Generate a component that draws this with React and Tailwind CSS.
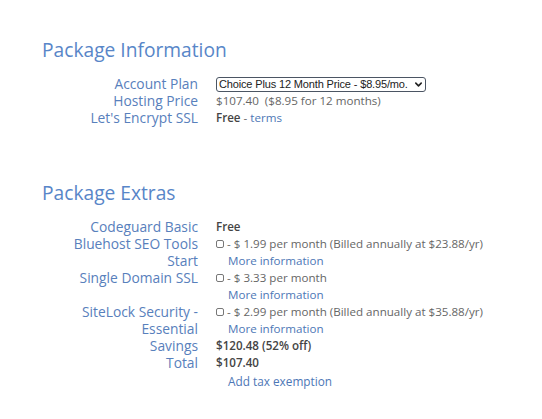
import React from 'react';

const label = "text-right text-[13.8px] leading-[17px] text-[#5880bc]";
const value = "text-[11.6px] leading-[17px] text-[#666]";

const Box = () => (
  <span className="inline-block w-[8px] h-[8px] border border-[#777] rounded-[2px] mr-[3px] align-[0px]"></span>
);

const Row = ({ name, children }) => (
  <>
    <div className={label}>{name}</div>
    <div className={value}>{children}</div>
  </>
);

const Extra = ({ price, billed }) => (
  <div>
    <div className="whitespace-nowrap">
      <Box />- $ {price} per month{billed && <> (Billed annually at ${billed}/yr)</>}
    </div>
    <div className="pl-[12px]">
      <a className="text-[#4d77b6] text-[11.6px]">More information</a>
    </div>
  </div>
);

export default function App() {
  return (
    <div className="w-[542px] h-[419px] bg-white px-[42px] pt-[37px]" style={{ fontFamily: '"Open Sans", sans-serif' }}>
      <h2 className="text-[19.2px] leading-[26px] text-[#5886c8]">Package Information</h2>
      <div className="grid grid-cols-[156px_1fr] gap-x-[18px] mt-[12px]">
        <Row name="Account Plan">
          <div className="flex items-center w-[210px] h-[15px] mt-[2px] border border-[#4b5563] rounded-[3px] pl-[2px] pr-[2px] text-[#222] text-[11px] tracking-[-0.15px] leading-[13px]" style={{ fontFamily: '"Liberation Sans", Arial, sans-serif' }}>
            <span className="flex-1 whitespace-nowrap overflow-hidden">Choice Plus 12 Month Price - $8.95/mo.</span>
            <svg className="w-[9px] h-[9px] shrink-0" viewBox="0 0 10 10" fill="none" stroke="#222" strokeWidth="1.8" strokeLinecap="round" strokeLinejoin="round">
              <path d="M2 3.5l3 3 3-3" />
            </svg>
          </div>
        </Row>
        <Row name="Hosting Price">$107.40&nbsp; ($8.95 for 12 months)</Row>
        <Row name="Let's Encrypt SSL">
          <span className="font-semibold text-[#444]">Free</span> - <a className="text-[#4d77b6]">terms</a>
        </Row>
      </div>

      <h2 className="text-[19.2px] leading-[26px] text-[#5886c8] mt-[54px]">Package Extras</h2>
      <div className="grid grid-cols-[156px_1fr] gap-x-[18px] mt-[12px]">
        <Row name="Codeguard Basic">
          <span className="font-semibold text-[#444]">Free</span>
        </Row>
        <Row name={<>Bluehost SEO Tools<br />Start</>}>
          <Extra price="1.99" billed="23.88" />
        </Row>
        <Row name="Single Domain SSL">
          <Extra price="3.33" />
        </Row>
        <Row name={<>SiteLock Security -<br />Essential</>}>
          <Extra price="2.99" billed="35.88" />
        </Row>
        <Row name="Savings">
          <span className="font-semibold text-[#444]">$120.48 (52% off)</span>
        </Row>
        <Row name="Total">
          <span className="font-semibold text-[#444]">$107.40</span>
        </Row>
        <div></div>
        <div className="pl-[12px] pt-[2px] text-[11.8px] leading-[17px]">
          <a className="text-[#4d77b6]">Add tax exemption</a>
        </div>
      </div>
    </div>
  );
}
